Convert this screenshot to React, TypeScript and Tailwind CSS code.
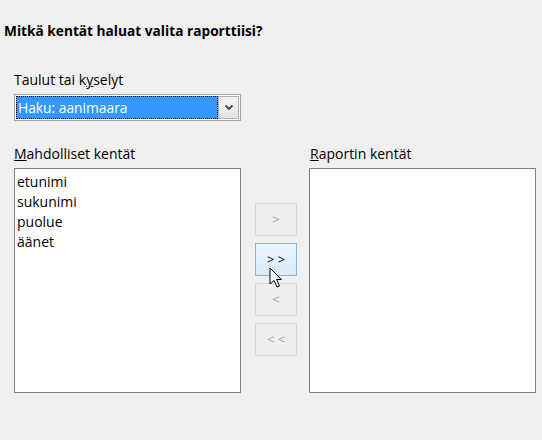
import React from "react";

const font = { fontFamily: '"Open Sans", "Noto Sans", "Liberation Sans", sans-serif' };

function Btn({ label, hover }: { label: string; hover?: boolean }) {
  return (
    <div
      className={
        "h-[33px] w-[42px] flex items-center justify-center text-[13px] " +
        (hover
          ? "border border-[#7eb4ea] bg-gradient-to-b from-[#ecf4fc] to-[#dcecfc] text-black"
          : "border border-[#dadada] bg-[#efefef] text-[#a3a3a3]")
      }
    >
      {label}
    </div>
  );
}

export default function App() {
  return (
    <div className="relative w-[542px] h-[440px] bg-[#f0f0f0] text-black overflow-hidden" style={font}>
      <div className="pt-[22px] pl-[4px] text-[13.7px] font-bold leading-[18px]">Mitkä kentät haluat valita raporttiisi?</div>
      <div className="pl-[14px]">
        <div className="mt-[31px] text-[14px] leading-[18px]">
          Taulut tai k<span className="underline">y</span>selyt
        </div>
        <div className="mt-[5px] w-[227px] h-[27px] border border-[#a5a5a5] bg-white p-[1px] flex">
          <div className="flex-1 border border-dotted border-black bg-[#3399ff] text-white text-[13.8px] leading-[22px] pl-[1px]">
            Haku: aanimaara
          </div>
          <div className="w-[21px] border border-[#acacac] bg-gradient-to-b from-[#f2f2f2] to-[#e5e5e5] flex items-center justify-center">
            <svg width="10" height="7" viewBox="0 0 10 7">
              <path d="M1.5 1.5 L5 5 L8.5 1.5" stroke="#444" strokeWidth="1.8" fill="none" />
            </svg>
          </div>
        </div>
        <div className="mt-[24px] flex">
          <div className="w-[227px]">
            <div className="text-[14px] leading-[18px]">
              <span className="underline">M</span>ahdolliset kentät
            </div>
            <div className="mt-[5px] h-[225px] border border-[#828282] bg-white pl-[2px] pt-[3px] text-[14px] leading-[20px]">
              <div>etunimi</div>
              <div>sukunimi</div>
              <div>puolue</div>
              <div>äänet</div>
            </div>
          </div>
          <div className="ml-[14px] w-[42px] pt-[58px] flex flex-col gap-[7px]">
            <Btn label=">" />
            <Btn label="> >" hover />
            <Btn label="<" />
            <Btn label="< <" />
          </div>
          <div className="ml-[12px] w-[227px]">
            <div className="text-[14px] leading-[18px] pl-[1px]">
              <span className="underline">R</span>aportin kentät
            </div>
            <div className="mt-[5px] h-[225px] border border-[#828282] bg-white" />
          </div>
        </div>
      </div>
      <svg className="absolute left-[269px] top-[267px]" width="14" height="22" viewBox="0 0 14 22">
        <path d="M1 1 L1 17 L5 13.5 L8 20 L10.5 19 L7.5 12.5 L12.5 12.5 Z" fill="white" stroke="black" strokeWidth="1" strokeLinejoin="miter" />
      </svg>
    </div>
  );
}
